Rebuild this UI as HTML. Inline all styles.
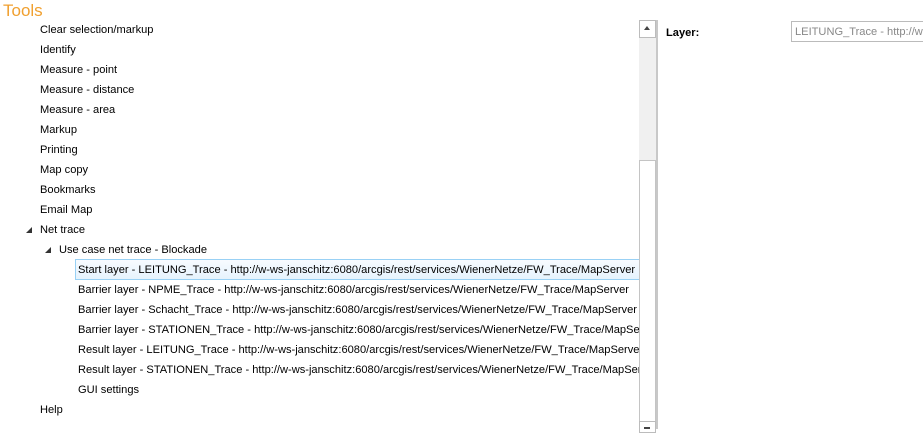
<!DOCTYPE html>
<html><head><style>
body{margin:0;width:923px;height:429px;overflow:hidden;background:#fff;font-family:"Liberation Sans",sans-serif;font-size:11.1px;color:#000;position:relative}
.t{position:absolute;left:3px;top:1px;font-size:17px;color:#f0a030}
.r{position:absolute;height:20px;line-height:22px;white-space:nowrap}
.tri{position:absolute;width:0;height:0;border-left:6px solid transparent;border-bottom:6px solid #333}
</style></head><body>
<div class="t">Tools</div>
<div class="r" style="left:40px;top:19px">Clear selection/markup</div>
<div class="r" style="left:40px;top:39px">Identify</div>
<div class="r" style="left:40px;top:59px">Measure - point</div>
<div class="r" style="left:40px;top:79px">Measure - distance</div>
<div class="r" style="left:40px;top:99px">Measure - area</div>
<div class="r" style="left:40px;top:119px">Markup</div>
<div class="r" style="left:40px;top:139px">Printing</div>
<div class="r" style="left:40px;top:159px">Map copy</div>
<div class="r" style="left:40px;top:179px">Bookmarks</div>
<div class="r" style="left:40px;top:199px">Email Map</div>
<div class="tri" style="left:26px;top:227px"></div>
<div class="r" style="left:40px;top:219px">Net trace</div>
<div class="tri" style="left:45px;top:247px"></div>
<div class="r" style="left:59px;top:239px">Use case net trace - Blockade</div>
<div style="position:absolute;left:75px;top:259px;width:563px;height:19px;border:1px solid #99d1f5;background:linear-gradient(#f7fbff,#e6f3fd)"></div>
<div style="position:absolute;left:75px;top:259px;width:564px;height:140px;overflow:hidden">
<div class="r" style="left:3px;top:0">Start layer - LEITUNG_Trace - http://w-ws-janschitz:6080/arcgis/rest/services/WienerNetze/FW_Trace/MapServer</div>
<div class="r" style="left:3px;top:20px">Barrier layer - NPME_Trace - http://w-ws-janschitz:6080/arcgis/rest/services/WienerNetze/FW_Trace/MapServer</div>
<div class="r" style="left:3px;top:40px">Barrier layer - Schacht_Trace - http://w-ws-janschitz:6080/arcgis/rest/services/WienerNetze/FW_Trace/MapServer</div>
<div class="r" style="left:3px;top:60px">Barrier layer - STATIONEN_Trace - http://w-ws-janschitz:6080/arcgis/rest/services/WienerNetze/FW_Trace/MapServer</div>
<div class="r" style="left:3px;top:80px">Result layer - LEITUNG_Trace - http://w-ws-janschitz:6080/arcgis/rest/services/WienerNetze/FW_Trace/MapServer</div>
<div class="r" style="left:3px;top:100px">Result layer - STATIONEN_Trace - http://w-ws-janschitz:6080/arcgis/rest/services/WienerNetze/FW_Trace/MapServer</div>
</div>
<div class="r" style="left:78px;top:379px">GUI settings</div>
<div class="r" style="left:40px;top:399px">Help</div>
<div style="position:absolute;left:639px;top:20px;width:17px;height:409px;background:#f0f0f0"></div>
<div style="position:absolute;left:639px;top:20px;width:15px;height:16px;border:1px solid #bcbcbc;background:#fff"></div>
<div style="position:absolute;left:644px;top:26px;width:0;height:0;border-left:3px solid transparent;border-right:3px solid transparent;border-bottom:4px solid #444"></div>
<div style="position:absolute;left:639px;top:160px;width:15px;height:260px;border:1px solid #c4c4c4;background:#fff"></div>
<div style="position:absolute;left:639px;top:421px;width:15px;height:10px;border:1px solid #bcbcbc;background:#fff"></div>
<div style="position:absolute;left:644px;top:427px;width:6px;height:2px;background:#444"></div>
<div style="position:absolute;left:656px;top:20px;width:2px;height:409px;background:#c8c8c8"></div>
<div class="r" style="left:666px;top:22px;font-weight:bold">Layer:</div>
<div style="position:absolute;left:791px;top:21px;width:140px;height:19px;border:1px solid #bbb;color:#888;line-height:20px;padding-left:3px;white-space:nowrap;overflow:hidden">LEITUNG_Trace - http://w-ws</div>
</body></html>
